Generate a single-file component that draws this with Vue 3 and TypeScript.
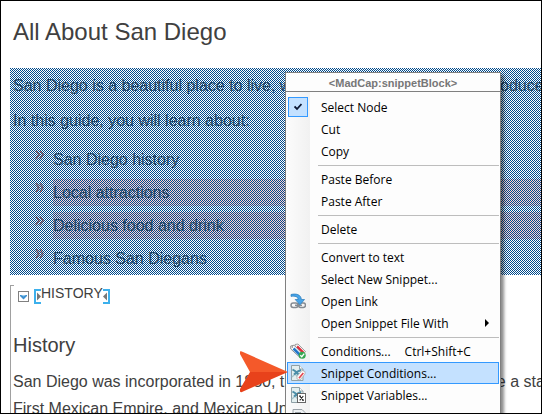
<script setup lang="ts">
import { ref } from 'vue'

type IconName = 'link' | 'tags' | 'conditions' | 'variables' | 'template'

interface MenuEntry {
  label: string
  shortcut?: string
  icon?: IconName
  checked?: boolean
  submenu?: boolean
}

const groups: MenuEntry[][] = [
  [{ label: 'Select Node', checked: true }, { label: 'Cut' }, { label: 'Copy' }],
  [{ label: 'Paste Before' }, { label: 'Paste After' }],
  [{ label: 'Delete' }],
  [
    { label: 'Convert to text' },
    { label: 'Select New Snippet...' },
    { label: 'Open Link', icon: 'link' },
    { label: 'Open Snippet File With', submenu: true },
  ],
  [
    { label: 'Conditions...', shortcut: 'Ctrl+Shift+C', icon: 'tags' },
    { label: 'Snippet Conditions...', icon: 'conditions' },
    { label: 'Snippet Variables...', icon: 'variables' },
    { label: 'Name...', icon: 'template' },
  ],
]

const topics = [
  { text: 'San Diego history', tinted: false },
  { text: 'Local attractions', tinted: true },
  { text: 'Delicious food and drink', tinted: true },
  { text: 'Famous San Diegans', tinted: false },
]

const active = ref('Snippet Conditions...')
const expanded = ref(true)
</script>

<template>
  <main class="editor">
    <h1 class="title">All About San Diego</h1>

    <section class="snippet">
      <p class="line">San Diego is a beautiful place to live, work or visit. This guide will introduce</p>
      <p class="line">In this guide, you will learn about:</p>
      <ul class="topics">
        <li v-for="topic in topics" :key="topic.text" class="topic">
          <svg class="chevrons" viewBox="0 0 10 10" aria-hidden="true">
            <path d="M1 0.5L4 4.5L1 9M5 0.5L8 4.5L5 9" fill="none" stroke="#dc6a50" stroke-width="1.6" />
          </svg>
          <span class="topic-text" :class="{ tinted: topic.tinted }">{{ topic.text }}</span>
        </li>
      </ul>
      <svg class="selection" aria-hidden="true">
        <defs>
          <pattern id="dither" width="2" height="2" patternUnits="userSpaceOnUse">
            <rect width="1" height="1" fill="#004a8c" />
            <rect x="1" y="1" width="1" height="1" fill="#004a8c" />
          </pattern>
        </defs>
        <rect width="100%" height="100%" fill="url(#dither)" shape-rendering="crispEdges" />
      </svg>
    </section>

    <section class="block">
      <div class="toggler">
        <button class="toggle" type="button" aria-label="Toggle section" :aria-expanded="expanded" @click="expanded = !expanded">
          <svg viewBox="0 0 11 11" aria-hidden="true">
            <rect x="0.5" y="0.5" width="10" height="10" fill="#fff" stroke="#808080" />
            <path d="M2 4H9V5L5.5 8.5L2 5Z" fill="#3c8fd0" />
            <path d="M3 4H8L5.5 5.5Z" fill="#9fd0ee" />
          </svg>
        </button>
        <svg class="bracket" viewBox="0 0 7 15" aria-hidden="true">
          <path d="M7 1H1V14H7" fill="none" stroke="#3cb0ec" stroke-width="2" />
          <path d="M3 3.5L7 7.5L3 11.5Z" fill="#777" />
        </svg>
        <span class="caption">HISTORY</span>
        <svg class="bracket" viewBox="0 0 7 15" aria-hidden="true">
          <path d="M0 1H6V14H0" fill="none" stroke="#3cb0ec" stroke-width="2" />
          <path d="M4 3.5L0 7.5L4 11.5Z" fill="#777" />
        </svg>
      </div>
      <h2 class="heading">History</h2>
      <p class="body">San Diego was incorporated in 1850, the very year California became a state.</p>
      <p class="body">First Mexican Empire, and Mexican United States</p>
    </section>

    <div class="menu" role="menu" aria-label="Snippet block">
      <div class="menu-title">&lt;MadCap:snippetBlock&gt;</div>
      <div class="menu-body">
        <div v-for="(group, i) in groups" :key="i" class="group">
          <button
            v-for="item in group"
            :key="item.label"
            class="item"
            :class="{ active: active === item.label }"
            type="button"
            :role="item.checked ? 'menuitemcheckbox' : 'menuitem'"
            :aria-checked="item.checked"
            @mouseenter="active = item.label"
          >
            <span class="glyph" :class="{ checked: item.checked }">
              <svg v-if="item.checked" class="tick" viewBox="0 0 8 8" aria-hidden="true">
                <path d="M0.5 3.5L3 6L7.5 1" fill="none" stroke="#0a1530" stroke-width="1.8" />
              </svg>
              <svg v-else-if="item.icon === 'link'" class="icon" viewBox="0 0 16 16" aria-hidden="true">
                <g fill="none" stroke="#858b92" stroke-width="1.5">
                  <rect x="1" y="10" width="7" height="4.5" rx="2.2" />
                  <rect x="8.5" y="10" width="7" height="4.5" rx="2.2" />
                  <path d="M5 12.3H12" />
                </g>
                <path d="M1 1.5C6 .2 11 1.5 11.4 6.5H14.5L10 11.8L5.2 6.5H8.2C8 3.8 5 2.6 1 3.4Z" fill="#48a5ea" stroke="#2678b8" stroke-width=".7" />
              </svg>
              <svg v-else-if="item.icon === 'tags'" class="icon" viewBox="0 0 16 16" aria-hidden="true">
                <path d="M5 1.5L8 1L15.5 8.5L12.5 12L5 5Z" fill="#f5f5f5" stroke="#8c8c8c" stroke-width=".8" />
                <path d="M7 3.5L13.5 9.8" stroke="#e22b3c" stroke-width="2.5" />
                <path d="M.7 3L4 2.2L13 11.3L10 14.5L.8 6Z" fill="#fff" stroke="#777" stroke-width=".8" />
                <path d="M3.5 5.5L10 12" stroke="#2478c9" stroke-width="2.6" />
                <circle cx="2.4" cy="4" r=".8" fill="#777" />
                <circle cx="12.2" cy="12.2" r="3.5" fill="#35a853" />
                <path d="M10.3 12.2L11.8 13.7L14.2 10.7" fill="none" stroke="#fff" stroke-width="1.3" />
              </svg>
              <svg v-else-if="item.icon === 'template'" class="icon" viewBox="0 0 16 16" aria-hidden="true">
                <path d="M3 .5H12L15 3.5V15.5H3Z" fill="#eef1f3" stroke="#9aa2a8" />
                <path d="M5 4H11M8 4V11" stroke="#9aa2a8" stroke-width="2" />
              </svg>
              <svg v-else-if="item.icon" class="icon" viewBox="0 0 16 16" aria-hidden="true">
                <path d="M1.5 .5H9.5L13 4V15.5H1.5Z" fill="#e3eff0" stroke="#8fa0a6" />
                <path d="M9.5 .5V4H13" fill="#fff" stroke="#8fa0a6" />
                <path d="M2 12L5 9L8 12" fill="none" stroke="#a4c3cc" stroke-width="1.4" />
                <path d="M2.5 4.5L5 6L8.5 9.5M11 5L7.5 6.5L4 9.5" fill="none" stroke="#4b8ea8" stroke-width="2" />
                <g v-if="item.icon === 'conditions'">
                  <path d="M7 11.5L12 5.5L15 6.5V9L10 15L7 14Z" fill="#fff" stroke="#a5a5a5" stroke-width=".7" />
                  <path d="M9 13.2L13.3 8" stroke="#e34850" stroke-width="1.7" />
                </g>
                <g v-else>
                  <rect x="7.5" y="6.5" width="8" height="9" fill="#fff" stroke="#666" />
                  <path d="M9.5 9L13.5 13.3M13.3 9L9.7 13.3M9 9H11M12 13.3H14" stroke="#222" stroke-width="1.1" />
                </g>
              </svg>
            </span>
            <span class="label">{{ item.label }}</span>
            <span v-if="item.shortcut" class="shortcut">{{ item.shortcut }}</span>
            <svg v-if="item.submenu" class="more" viewBox="0 0 4 8" aria-hidden="true">
              <path d="M0 0L4 4L0 8Z" fill="#000" />
            </svg>
          </button>
        </div>
      </div>
    </div>

    <svg class="pointer" viewBox="0 0 48 42" aria-hidden="true">
      <path d="M0 .5Q1-.2 3 1L48 21H10L0 3Z" fill="#f4592a" />
      <path d="M10 21H48L3 40.5Q1 42 0 40.5V38Z" fill="#e8421b" />
    </svg>
  </main>
</template>

<style>
body {
  margin: 0;
}
</style>

<style scoped>
.editor {
  box-sizing: border-box;
  position: relative;
  height: 100vh;
  padding-left: 9px;
  overflow: hidden;
  border: 1px solid #000;
  background: #fff;
  color: #404040;
  font-family: "Liberation Sans", Arial, sans-serif;
  font-size: 16px;
  white-space: nowrap;
}

.title {
  margin: 0;
  padding: 16px 0 21px 3px;
  font-size: 24px;
  font-weight: 400;
  line-height: 30px;
}

.snippet {
  position: relative;
  overflow: hidden;
}

.selection {
  position: absolute;
  inset: 0;
  width: 100%;
  height: 100%;
}

.line {
  margin: 0;
  padding-left: 3px;
  line-height: 35px;
}

.topics {
  margin: 0;
  padding: 5px 0 0 25px;
  list-style: none;
}

.topic {
  display: flex;
  align-items: center;
  height: 33px;
}

.chevrons {
  width: 10px;
  height: 10px;
  margin: 0 8px 10px 0;
}

.topic-text {
  flex: 1;
  line-height: 27px;
}

.tinted {
  background: #ffd2d2;
}

.block {
  position: relative;
  margin-top: 10px;
  padding-left: 2px;
  border-left: 1px solid #a0a0a0;
}

.block::before {
  content: "";
  position: absolute;
  top: 0;
  left: 0;
  width: 3px;
  border-top: 1px solid #a0a0a0;
}

.toggler {
  display: flex;
  align-items: flex-start;
  padding: 4px 0 0 5px;
}

.toggle {
  display: block;
  width: 11px;
  height: 11px;
  margin: 2px 5px 0 0;
  padding: 0;
  border: 0;
  background: none;
}

.toggle svg {
  display: block;
}

.bracket {
  width: 7px;
  height: 15px;
}

.caption {
  margin-top: -4px;
  font-size: 14px;
  line-height: 16px;
}

.heading {
  margin: 0;
  padding: 26px 0 8px;
  font-size: 20px;
  font-weight: 400;
  line-height: 30px;
}

.body {
  margin: 0;
  line-height: 27px;
}

.menu {
  position: absolute;
  top: 71px;
  left: 284px;
  width: 214px;
  border: 1px solid #808080;
  background: #fdfdfd;
  box-shadow: 3px 3px 3px rgba(0, 0, 0, 0.45);
  color: #000;
  font-family: "Open Sans", "Noto Sans", sans-serif;
  font-size: 12px;
}

.menu-title {
  padding-top: 3px;
  border-bottom: 1px solid #808080;
  color: #777;
  font-family: "Liberation Sans", Arial, sans-serif;
  font-size: 11px;
  font-weight: 700;
  line-height: 15px;
  text-align: center;
}

.menu-body {
  padding: 4px 1px;
  background: linear-gradient(to right, #fcfcfc, #f1f1f1 24px, #fdfdfd 24px);
}

.group + .group::before {
  content: "";
  display: block;
  height: 1px;
  margin: 3px 0 2px 31px;
  background: #bdbdbd;
}

.item {
  box-sizing: border-box;
  display: flex;
  align-items: center;
  width: 100%;
  height: 22px;
  padding: 0;
  border: 1px solid transparent;
  background: none;
  color: inherit;
  font: inherit;
  text-align: left;
}

.active {
  border-color: #3399ff;
  background: #c4e1ff;
}

.glyph {
  box-sizing: border-box;
  display: flex;
  align-items: center;
  justify-content: center;
  width: 20px;
  height: 20px;
  margin-right: 13px;
}

.checked {
  border: 1px solid #3399ff;
  background: #c4e1ff;
}

.tick {
  width: 8px;
  height: 8px;
}

.icon {
  width: 16px;
  height: 16px;
}

.shortcut {
  margin-left: 14px;
}

.more {
  width: 4px;
  height: 8px;
  margin: 0 9px 0 auto;
}

.pointer {
  position: absolute;
  top: 350px;
  left: 239px;
  width: 48px;
  height: 42px;
}
</style>
